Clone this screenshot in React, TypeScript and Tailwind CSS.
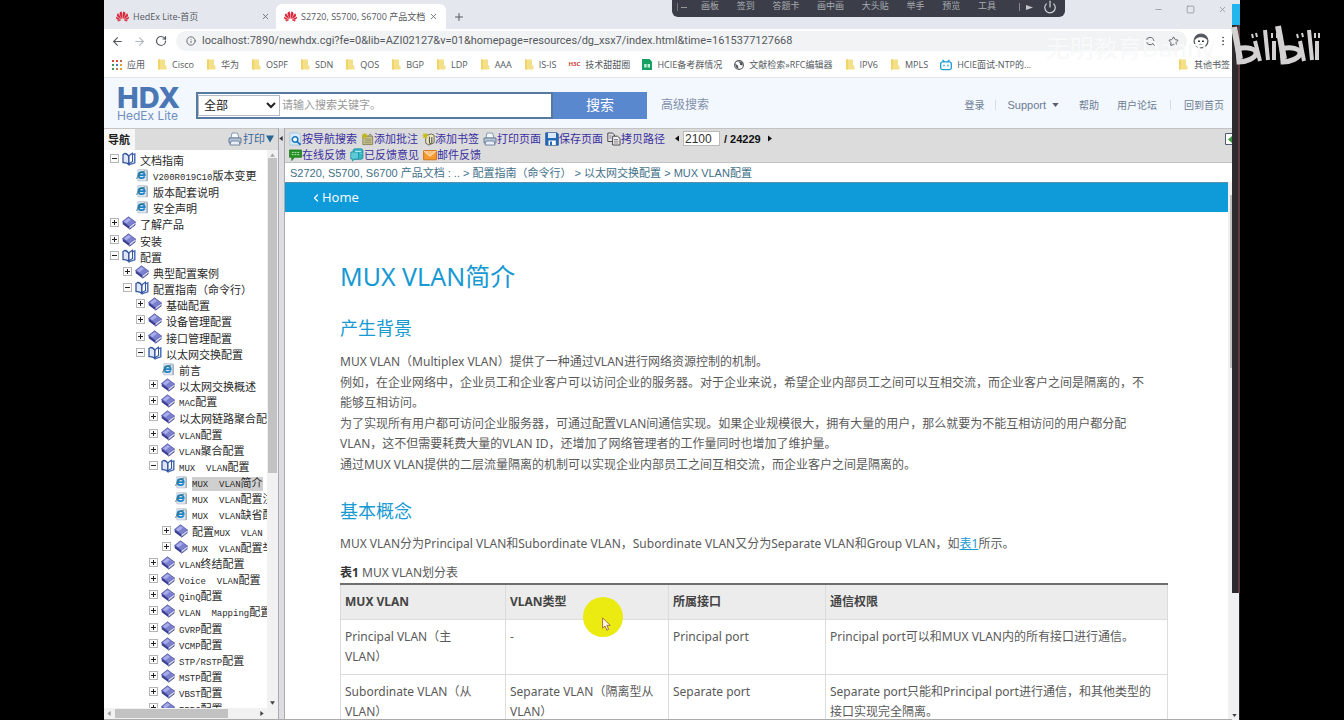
import React from "react";
import { ArrowLeft, ArrowRight, ChevronLeft, Info, Minus, MoreVertical, Plus, Power, RotateCw, Square, Star, X, ZoomOut } from "lucide-react";
import { SiBilibili, SiHuawei } from "react-icons/si";

/* ---------- icons ---------- */

const ClosedBook = () => (
  <svg viewBox="0 0 14 14" className="h-[14px] w-[14px] shrink-0" aria-hidden="true">
    <path d="M0.5 5.5 L6.5 0.8 L13.5 6 L7.5 10.5 Z" fill="#7b80cf" stroke="#4a4fa0" strokeWidth="0.7" />
    <path d="M2 5.4 L6.5 1.9 L9 3.8 L4.5 7.2 Z" fill="#a9adea" />
    <path d="M0.5 5.5 L7.5 10.5 L7.5 13.3 L0.8 8.3 Z" fill="#383d92" />
    <path d="M7.5 10.5 L13.5 6 L13 8.3 L7.5 12.5 Z" fill="#eceefa" stroke="#4a4fa0" strokeWidth="0.5" />
    <path d="M7.5 13.3 L13.6 8.6" stroke="#383d92" strokeWidth="0.9" />
  </svg>
);

const OpenBook = () => (
  <svg viewBox="0 0 14 14" className="h-[14px] w-[14px] shrink-0" aria-hidden="true">
    <path d="M1 2.5 L2.8 1.5 C5 1.6 6.2 3 6.8 4.4 L6.8 12.5 C5.5 10.8 3.5 10.4 1 10.6 Z" fill="#dfe6fb" stroke="#34559c" strokeWidth="1.3" />
    <path d="M7 4.4 C7.4 3 9 2.2 10.4 1.2 L10.6 9.6 C9 10.3 7.6 11 7 12.5 Z" fill="#fff" stroke="#34559c" strokeWidth="1.1" />
    <path d="M10.6 2.6 L12.8 2 L12.8 10.8 L7.4 12.6" fill="none" stroke="#3f66b8" strokeWidth="1.4" />
  </svg>
);

const PageIcon = () => (
  <svg viewBox="0 0 14 14" className="h-[13px] w-[14px] shrink-0" aria-hidden="true">
    <path d="M2.5 0.7 H12.4 V12.8 H2.5 Z" fill="#dfe7f2" stroke="#b5bfcd" strokeWidth="0.8" />
    <path d="M12.6 1.5 V13" stroke="#7d8ba1" strokeWidth="0.9" />
    <path d="M9.8 8 C8.6 11 3.2 10.4 3.2 6.6 C3.2 2.6 9.6 2.2 9.9 6.5 L4 6.5" fill="none" stroke="#1e83c4" strokeWidth="1.9" />
    <path d="M1.4 10.8 C1 8 6 2.4 10.6 2.2" fill="none" stroke="#3b6b55" strokeWidth="0.9" />
  </svg>
);

const Toggle = ({ open }: { open: boolean }) => (
  <svg viewBox="0 0 9 9" className="h-[9px] w-[9px]" aria-hidden="true">
    <rect x="0.5" y="0.5" width="8" height="8" fill="#fbfbfb" stroke="#b5b5b5" />
    <path d={open ? "M2 4.5 H7" : "M2 4.5 H7 M4.5 2 V7"} stroke="#222" />
  </svg>
);

const FolderMark = () => (
  <svg viewBox="0 0 10 11" className="h-[11px] w-[10px] shrink-0" aria-hidden="true">
    <path d="M1 0.5 H8 V6.5 H9.5 V10.5 H1 Z" fill="#f5e08a" />
    <path d="M1 0.5 H3 V10.5 H1 Z" fill="#f0d468" />
  </svg>
);

const SearchPage = () => (
  <svg viewBox="0 0 14 14" className="h-[14px] w-[13px]" aria-hidden="true">
    <path d="M1 0.5 H10 L12.5 3 V13.5 H1 Z" fill="#d9ecfa" stroke="#9fc0da" strokeWidth="0.8" />
    <circle cx="6.5" cy="7.5" r="3" fill="#fff" stroke="#1b76bb" strokeWidth="1.7" />
    <path d="M8.7 9.8 L12.5 13.2" stroke="#1b76bb" strokeWidth="1.9" />
  </svg>
);
const NoteIcon = () => (
  <svg viewBox="0 0 14 14" className="h-[14px] w-[13px]" aria-hidden="true">
    <path d="M2 4 H12.5 V13 H2 Z" fill="#c9c48f" stroke="#7c7a52" strokeWidth="0.9" />
    <path d="M4 7 H11 M4 9 H11 M4 11 H11" stroke="#85835e" strokeWidth="0.8" />
    <path d="M4 0.5 V7 M0.8 3.6 H7.2 M1.6 1.4 L6.2 5.9 M6.2 1.4 L1.6 5.9" stroke="#c1b51c" strokeWidth="1.1" />
    <path d="M8 4 L10 1.5 L11.5 4" fill="none" stroke="#7c7a52" />
  </svg>
);
const BookmarkIcon = () => (
  <svg viewBox="0 0 14 14" className="h-[14px] w-[13px]" aria-hidden="true">
    <path d="M4 3.5 L10 1.5 L13 3 V11 L7.5 13.5 L4 11.5 Z" fill="#e9e6c8" stroke="#55523e" strokeWidth="0.9" />
    <path d="M8 4.5 V11.2 C8 12.4 10.6 12 10.6 10.6 V5" fill="none" stroke="#3d3b30" strokeWidth="1" />
    <path d="M3.5 0.5 V6.5 M0.5 3.5 H6.5 M1.3 1.3 L5.7 5.7 M5.7 1.3 L1.3 5.7" stroke="#c9bc1a" strokeWidth="1.1" />
  </svg>
);
const PrintIcon = () => (
  <svg viewBox="0 0 14 14" className="h-[14px] w-[14px]" aria-hidden="true">
    <path d="M4 1 H9.5 L11 6 H3 Z" fill="#f6f9fd" stroke="#7187a3" strokeWidth="0.8" />
    <path d="M1 6 H13 V11 H1 Z" fill="#b9c6d8" stroke="#5d7390" strokeWidth="0.9" />
    <path d="M3 9 H11 L12 13 H2 Z" fill="#e9eff6" stroke="#5d7390" strokeWidth="0.8" />
  </svg>
);
const SaveIcon = () => (
  <svg viewBox="0 0 14 14" className="h-[14px] w-[14px]" aria-hidden="true">
    <path d="M0.7 0.8 H12 L13.3 2 V13.2 H0.7 Z" fill="#2469b8" stroke="#174e92" strokeWidth="0.7" />
    <path d="M3 1 H11 V6 H3 Z" fill="#dbe9f7" />
    <path d="M3.5 8.5 H10.8 V13 H3.5 Z" fill="#fff" />
    <path d="M5 9.5 H7 V13 H5 Z" fill="#2469b8" />
  </svg>
);
const CopyIcon = () => (
  <svg viewBox="0 0 14 14" className="h-[14px] w-[14px]" aria-hidden="true">
    <path d="M0.8 1 H5.5 L7.5 3 V9.5 H0.8 Z" fill="#e6e6ea" stroke="#4a4a52" />
    <path d="M5.6 4.2 H10.5 L13 6.5 V13 H5.6 Z" fill="#f3f3f6" stroke="#4a4a52" />
    <path d="M7 7.5 H11 M7 9.2 H11.5 M7 11 H11.5 M2.2 4 H4.6 M2.2 6 H4.6" stroke="#6a6a74" strokeWidth="0.8" />
  </svg>
);
const ChatIcon = () => (
  <svg viewBox="0 0 14 14" className="h-[14px] w-[13px]" aria-hidden="true">
    <path d="M0.5 1.5 H13.5 V9.5 H6 L3 13 V9.5 H0.5 Z" fill="#229222" stroke="#167016" strokeWidth="0.7" />
    <path d="M3 4.2 H11 M3 6.6 H11" stroke="#c9efc9" strokeWidth="1" strokeDasharray="2 1" />
  </svg>
);
const RepliedIcon = () => (
  <svg viewBox="0 0 14 14" className="h-[14px] w-[14px]" aria-hidden="true">
    <rect x="3" y="0.8" width="10" height="10.5" rx="2" fill="#35b4c4" stroke="#1a8fa3" strokeWidth="0.8" />
    <path d="M0.8 4 H8.5 V11 H4 L2.5 13.2 V11 H0.8 Z" fill="#5ccbd6" stroke="#1a8fa3" strokeWidth="0.8" />
    <path d="M5 3.4 H11 M10.6 5.6 H11.4" stroke="#d6f6fa" strokeWidth="0.9" />
  </svg>
);
const MailIcon = () => (
  <svg viewBox="0 0 14 14" className="h-[14px] w-[14px]" aria-hidden="true">
    <path d="M0.6 2.6 H13.4 V11.8 H0.6 Z" fill="#f59b32" stroke="#cf6d10" strokeWidth="0.9" />
    <path d="M0.8 2.9 L7 8.2 L13.2 2.9" fill="#fbc27b" stroke="#fdebd2" strokeWidth="0.9" />
  </svg>
);
const AppsGrid = () => (
  <svg viewBox="0 0 10 10" className="h-[10px] w-[10px] shrink-0" aria-hidden="true">
    {["#d64c3d", "#d64c3d", "#c2633d", "#3c9a55", "#4a78c8", "#d9a627", "#3c9a55", "#b3874c", "#d9a627"].map((c, i) => (
      <rect key={i} x={(i % 3) * 4} y={Math.floor(i / 3) * 4} width="2" height="2" fill={c} />
    ))}
  </svg>
);
const SheetIcon = () => (
  <svg viewBox="0 0 10 11" className="h-[11px] w-[10px] shrink-0" aria-hidden="true">
    <path d="M0 0 H7.5 L10 2.5 V11 H0 Z" fill="#16a163" />
    <path d="M2.2 5 H4.6 V8.5 H2.2 Z M5.6 5 H8 V8.5 H5.6 Z" fill="#c9f0dc" />
  </svg>
);
const GlobeIcon = () => (
  <svg viewBox="0 0 10 10" className="h-[10px] w-[10px] shrink-0" aria-hidden="true">
    <circle cx="5" cy="5" r="4.4" fill="#fff" stroke="#55595e" strokeWidth="1.1" />
    <path d="M1 3.5 L4 5.5 L4.5 8.8 L2 7.6 Z M4 1 L8.6 2.6 L8.6 5.5 L6 5 L6 3.6 Z" fill="#55595e" />
  </svg>
);
const Avatar = () => (
  <svg viewBox="0 0 16 16" className="h-[16px] w-[16px]" aria-hidden="true">
    <circle cx="8" cy="8" r="6.9" fill="#fff" stroke="#55595e" strokeWidth="1.3" />
    <path d="M1.5 7.5 C2 2 5 1.2 8 1.2 C11 1.2 14 2 14.5 7.5 C12.5 4.6 9 4.3 8 4.3 C6 4.3 3.5 4.6 1.5 7.5 Z" fill="#55595e" />
    <path d="M5 8.2 H7 M9 8.2 H11" stroke="#33363a" strokeWidth="1.4" />
    <path d="M6 11.4 H10" stroke="#8a8e94" strokeWidth="0.8" />
  </svg>
);

const BiliLogo = () => (
  <svg viewBox="0 0 90 42" className="h-[42px] w-[90px]" fill="none" stroke="#d3d1d1" aria-label="bilibili">
    <g>
      <path d="M3 2 L9 34" strokeWidth="6" />
      <path d="M7 24 C16 21 25 24 25 28 C25 33 15 37 8 37 Z" strokeWidth="5" />
      <path d="M24 16 L29 36 M34 5 L37 35 M43 16 L43 35" strokeWidth="4" />
      <path d="M21 9 L22 13 M25 8 L26 12 M41 8 V13 M46 8 V13" strokeWidth="2" />
    </g>
    <g transform="translate(44 0)">
      <path d="M3 1 L9 34" strokeWidth="6" />
      <path d="M7 24 C16 21 25 24 25 28 C25 33 15 37 8 37 Z" strokeWidth="5" />
      <path d="M25 16 L29 36 M34 5 L37 35 M42 16 L42 35" strokeWidth="4" />
      <path d="M22 9 L23 13 M27 8 L28 12 M40 8 V13 M44 8 V13" strokeWidth="2" />
    </g>
  </svg>
);

/* ---------- navigation tree ---------- */

type Kind = "open" | "closed" | "page";
type Node = { level: number; kind: Kind; label: string; current?: boolean };

const tree: Node[] = [
  { level: 0, kind: "open", label: "文档指南" },
  { level: 1, kind: "page", label: "V200R019C10版本变更" },
  { level: 1, kind: "page", label: "版本配套说明" },
  { level: 1, kind: "page", label: "安全声明" },
  { level: 0, kind: "closed", label: "了解产品" },
  { level: 0, kind: "closed", label: "安装" },
  { level: 0, kind: "open", label: "配置" },
  { level: 1, kind: "closed", label: "典型配置案例" },
  { level: 1, kind: "open", label: "配置指南（命令行）" },
  { level: 2, kind: "closed", label: "基础配置" },
  { level: 2, kind: "closed", label: "设备管理配置" },
  { level: 2, kind: "closed", label: "接口管理配置" },
  { level: 2, kind: "open", label: "以太网交换配置" },
  { level: 3, kind: "page", label: "前言" },
  { level: 3, kind: "closed", label: "以太网交换概述" },
  { level: 3, kind: "closed", label: "MAC配置" },
  { level: 3, kind: "closed", label: "以太网链路聚合配置" },
  { level: 3, kind: "closed", label: "VLAN配置" },
  { level: 3, kind: "closed", label: "VLAN聚合配置" },
  { level: 3, kind: "open", label: "MUX  VLAN配置" },
  { level: 4, kind: "page", label: "MUX  VLAN简介", current: true },
  { level: 4, kind: "page", label: "MUX  VLAN配置注意事项" },
  { level: 4, kind: "page", label: "MUX  VLAN缺省配置" },
  { level: 4, kind: "closed", label: "配置MUX  VLAN" },
  { level: 4, kind: "closed", label: "MUX  VLAN配置举例" },
  { level: 3, kind: "closed", label: "VLAN终结配置" },
  { level: 3, kind: "closed", label: "Voice  VLAN配置" },
  { level: 3, kind: "closed", label: "QinQ配置" },
  { level: 3, kind: "closed", label: "VLAN  Mapping配置" },
  { level: 3, kind: "closed", label: "GVRP配置" },
  { level: 3, kind: "closed", label: "VCMP配置" },
  { level: 3, kind: "closed", label: "STP/RSTP配置" },
  { level: 3, kind: "closed", label: "MSTP配置" },
  { level: 3, kind: "closed", label: "VBST配置" },
  { level: 3, kind: "closed", label: "ERPS配置" },
];

const indent = ["pl-0", "pl-[13px]", "pl-[26px]", "pl-[39px]", "pl-[52px]"];

/* Latin runs are set in a narrower monospace than the ideographs around them. */
const MixedLabel = ({ text }: { text: string }) => (
  <>
    {text.split(/([ -~]+)/).map((run, i) =>
      /^[ -~]+$/.test(run) ? (
        <span key={i} className="font-['Liberation_Mono',monospace] text-[9px]">{run}</span>
      ) : (
        run
      ),
    )}
  </>
);

function NavTree() {
  return (
    <ul className="min-w-0 flex-1 overflow-hidden pt-[2px] pl-[6px] text-[11px] text-[#2a2a2a]">
      {tree.map((n, i) => (
        <li key={i} className={`flex h-[16px] items-center nth-[6n]:mt-px ${indent[n.level]}`}>
          {n.kind === "page" ? (
            <span className="w-[9px] shrink-0" />
          ) : (
            <button type="button" aria-label={n.kind === "open" ? "collapse" : "expand"} className="w-[9px] shrink-0 pb-[3px]">
              <Toggle open={n.kind === "open"} />
            </button>
          )}
          <span className="mr-[4px] ml-[3px] pb-[2px]">
            {n.kind === "page" ? <PageIcon /> : n.kind === "open" ? <OpenBook /> : <ClosedBook />}
          </span>
          <a href="#doc" className={`mt-[2px] flex h-[14px] items-center whitespace-pre ${n.current ? "bg-[#cfcfcf]" : ""}`}>
            <span><MixedLabel text={n.label} /></span>
          </a>
        </li>
      ))}
    </ul>
  );
}

function Sidebar() {
  return (
    <aside className="flex w-[174px] shrink-0 flex-col">
      <div className="flex h-[22px] shrink-0 items-end border-t border-[#c5c5c5] bg-[#dcdcdc] text-[11px] leading-[16px]">
        <span className="w-[31px] self-stretch bg-[#f6f6f6] pt-[3px] pl-[4px] font-bold whitespace-nowrap text-[#222]">导航</span>
        <button type="button" className="ml-auto flex items-center gap-px pr-[4px] pb-[3px] text-[#38669a]">
          <PrintIcon />
          打印
          <svg viewBox="0 0 8 8" className="h-[8px] w-[8px]" aria-hidden="true"><path d="M0 0.5 H8 L4 7.5 Z" fill="#256695" /></svg>
        </button>
      </div>
      <div className="flex min-h-0 flex-1">
        <NavTree />
        <div className="flex w-[11px] shrink-0 flex-col items-center bg-[#f1f1f1] py-[3px]">
          <svg viewBox="0 0 6 4" className="h-[4px] w-[5px]" aria-hidden="true"><path d="M0 4 H6 L3 0 Z" fill="#aaa" /></svg>
          <div className="mt-px h-[57%] w-[9px] bg-[#c2c2c2]" />
          <svg viewBox="0 0 6 4" className="mt-auto h-[4px] w-[5px]" aria-hidden="true"><path d="M0 0 H6 L3 4 Z" fill="#444" /></svg>
        </div>
      </div>
      <div className="flex h-[11px] shrink-0 items-center bg-[#f1f1f1] px-[3px]">
        <svg viewBox="0 0 4 6" className="h-[5px] w-[4px]" aria-hidden="true"><path d="M4 0 V6 L0 3 Z" fill="#999" /></svg>
        <div className="ml-[4px] h-[9px] w-[67%] bg-[#c2c2c2]" />
        <svg viewBox="0 0 4 6" className="mr-[11px] ml-auto h-[5px] w-[4px]" aria-hidden="true"><path d="M0 0 V6 L4 3 Z" fill="#444" /></svg>
      </div>
    </aside>
  );
}

/* ---------- browser frame ---------- */

const folder = <FolderMark />;
const bookmarks: { icon: React.ReactNode; label: string }[] = [
  { icon: <AppsGrid />, label: "应用" },
  { icon: folder, label: "Cisco" },
  { icon: folder, label: "华为" },
  { icon: folder, label: "OSPF" },
  { icon: folder, label: "SDN" },
  { icon: folder, label: "QOS" },
  { icon: folder, label: "BGP" },
  { icon: folder, label: "LDP" },
  { icon: folder, label: "AAA" },
  { icon: folder, label: "IS-IS" },
  { icon: <span className="text-[6px] font-bold text-[#d5382f]">H3C</span>, label: "技术甜甜圈" },
  { icon: <SheetIcon />, label: "HCIE备考群情况" },
  { icon: <GlobeIcon />, label: "文献检索»RFC编辑器" },
  { icon: folder, label: "IPV6" },
  { icon: folder, label: "MPLS" },
  { icon: <SiBilibili className="h-[12px] w-[12px] shrink-0 text-[#1f9fd0]" />, label: "HCIE面试-NTP的..." },
];

function BrowserFrame() {
  return (
    <div className="shrink-0 font-['Open_Sans','Noto_Sans_CJK_SC',sans-serif] text-[#55595e]">
      <div className="flex h-[29px] bg-[#e4e7ed] text-[9px]">
        <div className="flex w-[172px] items-center gap-[4px] pt-[4px] pl-[12px]">
          <SiHuawei className="h-[13px] w-[13px] text-[#d92b3e]" />
          <span>HedEx Lite-首页</span>
          <X className="mr-[6px] ml-auto h-[9px] w-[9px]" />
        </div>
        <div className="mt-[4px] flex w-[170px] items-center gap-[4px] rounded-t-[6px] bg-white pl-[8px]">
          <SiHuawei className="h-[13px] w-[13px] shrink-0 text-[#d92b3e]" />
          <span className="overflow-hidden whitespace-nowrap">S2720, S5700, S6700 产品文档</span>
          <X className="mr-[8px] ml-auto h-[9px] w-[9px] shrink-0" />
        </div>
        <button type="button" aria-label="new tab" className="ml-[7px] pt-[4px]"><Plus className="h-[12px] w-[12px]" /></button>
        <div className="mr-[5px] ml-auto flex items-start gap-[23px] pt-[5px] text-[#8b8f96]">
          <Minus className="h-[9px] w-[9px]" />
          <Square className="h-[9px] w-[9px]" />
          <X className="h-[9px] w-[9px]" />
        </div>
      </div>
      <div className="flex h-[24px] items-center bg-white pl-[7px]">
        <ArrowLeft className="h-[13px] w-[13px]" />
        <ArrowRight className="ml-[9px] h-[13px] w-[13px] text-[#b4b8bd]" />
        <RotateCw className="ml-[9px] h-[12px] w-[12px]" strokeWidth={2.4} />
        <div className="ml-[9px] flex h-[20px] min-w-0 flex-1 items-center rounded-l-full rounded-r-full bg-[#f1f3f4] pl-[10px] text-[11px]">
          <Info className="mr-[6px] h-[10px] w-[10px] shrink-0" />
          <label className="sr-only" htmlFor="url">URL</label>
          <input id="url" className="min-w-0 flex-1 bg-transparent font-['Roboto',sans-serif] outline-none" defaultValue="localhost:7890/newhdx.cgi?fe=0&lib=AZI02127&v=01&homepage=resources/dg_xsx7/index.html&time=1615377127668" />
          <ZoomOut className="mr-[12px] h-[11px] w-[11px]" />
          <Star className="mr-[8px] h-[11px] w-[11px]" />
        </div>
        <span className="ml-[6px]"><Avatar /></span>
        <MoreVertical className="mr-[3px] ml-[8px] h-[12px] w-[12px]" />
      </div>
      <nav className="flex h-[25px] items-center gap-[12px] border-b border-[#e3e5e8] bg-white pb-px pl-[8px] text-[9px] whitespace-nowrap">
        {bookmarks.map((b) => (
          <a key={b.label} href="#bookmark" className="flex items-center gap-[5px]">{b.icon}{b.label}</a>
        ))}
        <a href="#bookmark" className="mr-[2px] ml-auto flex items-center gap-[6px]">{folder}其他书签</a>
      </nav>
    </div>
  );
}

function SiteHeader() {
  return (
    <header className="flex h-[50px] shrink-0 items-center bg-[#f3f7fe] pl-[13px] text-[#6c7c92]">
      <div className="w-[66px] font-['Inter',sans-serif] text-[#4b78b5]">
        <div className="text-[29px] leading-[25px] font-extrabold">HDX</div>
        <div className="text-[12px] leading-[12px] whitespace-nowrap text-[#6f8fc0]">HedEx Lite</div>
      </div>
      <form className="ml-[13px] mt-[5px] flex h-[27px]" onSubmit={(e) => e.preventDefault()}>
        <div className="flex border-2 border-[#56799f] bg-white">
          <select aria-label="范围" className="my-px w-[82px] border border-[#b5bcc8] bg-white pl-px text-[12px] text-[#222]">
            <option>全部</option>
          </select>
          <input aria-label="搜索" placeholder="请输入搜索关键字。" className="w-[271px] px-[2px] text-[11px] outline-none placeholder:text-[#999]" />
        </div>
        <button type="submit" className="w-[94px] bg-[#5a88cf] text-[14px] text-white">搜索</button>
      </form>
      <a href="#advanced" className="mt-[4px] ml-[14px] text-[12px] text-[#7f90aa]">高级搜索</a>
      <nav className="mr-[8px] ml-auto flex items-center pt-[4px] text-[10px]">
        <a href="#login">登录</a>
        <span className="mx-[11px] h-[10px] w-px bg-[#d6dbe4]" />
        <a href="#support" className="flex items-center gap-[6px] text-[11px]">
          Support
          <svg viewBox="0 0 8 5" className="h-[4px] w-[7px]" aria-hidden="true"><path d="M0 0 H8 L4 5 Z" fill="#55606e" /></svg>
        </a>
        <a href="#help" className="ml-[20px]">帮助</a>
        <a href="#forum" className="ml-[18px]">用户论坛</a>
        <span className="mx-[13px] h-[10px] w-px bg-[#d6dbe4]" />
        <a href="#home">回到首页</a>
      </nav>
    </header>
  );
}

/* ---------- document pane ---------- */

const Tool = ({ icon, children }: { icon: React.ReactNode; children: React.ReactNode }) => (
  <a href="#tool" className="flex items-center whitespace-nowrap">{icon}{children}</a>
);

function Toolbar() {
  return (
    <div className="h-[35px] shrink-0 border-y border-[#c2c2c2] bg-[#dcdcdc] pl-[4px] text-[11px] leading-[16px] text-[#3a2fa0]">
      <div className="flex h-[16px] items-center gap-[4px] pt-[3px]">
        <Tool icon={<SearchPage />}>按导航搜索</Tool>
        <Tool icon={<NoteIcon />}>添加批注</Tool>
        <Tool icon={<BookmarkIcon />}>添加书签</Tool>
        <Tool icon={<PrintIcon />}>打印页面</Tool>
        <Tool icon={<SaveIcon />}>保存页面</Tool>
        <Tool icon={<CopyIcon />}>拷贝路径</Tool>
        <button type="button" aria-label="previous" className="ml-[6px]">
          <svg viewBox="0 0 4 6" className="h-[7px] w-[4px]"><path d="M4 0 V6 L0 3 Z" fill="#111" /></svg>
        </button>
        <input aria-label="页码" defaultValue="2100" className="h-[15px] w-[37px] border border-[#b9b9b9] bg-white px-px text-[12px] text-[#333]" />
        <b className="text-[#111]">/ 24229</b>
        <button type="button" aria-label="next" className="ml-[3px]">
          <svg viewBox="0 0 4 6" className="h-[7px] w-[4px]"><path d="M0 0 V6 L4 3 Z" fill="#111" /></svg>
        </button>
        <svg viewBox="0 0 7 12" className="ml-auto h-[12px] w-[7px]" aria-hidden="true">
          <path d="M7 0.5 H0.5 V11.5 H7" fill="#fff" stroke="#555a75" />
          <path d="M7 3 L3 6.5 L7 10 Z" fill="#3f9c3f" />
        </svg>
      </div>
      <div className="flex h-[16px] items-center gap-[4px] pt-[3px]">
        <Tool icon={<ChatIcon />}>在线反馈</Tool>
        <Tool icon={<RepliedIcon />}>已反馈意见</Tool>
        <Tool icon={<MailIcon />}>邮件反馈</Tool>
      </div>
    </div>
  );
}

const rows: React.ReactNode[][] = [
  [<>Principal VLAN（主<br />VLAN）</>, "-", "Principal port", "Principal port可以和MUX VLAN内的所有接口进行通信。"],
  [<>Subordinate VLAN（从<br />VLAN）</>, <>Separate VLAN（隔离型从<br />VLAN）</>, "Separate port", <>Separate port只能和Principal port进行通信，和其他类型的<br />接口实现完全隔离。</>],
];

const H2 = ({ children }: { children: React.ReactNode }) => (
  <h2 className="text-[18px] leading-[24px] text-[#1899d2]">{children}</h2>
);

function Article() {
  return (
    <article id="doc" className="min-w-0 flex-1 overflow-hidden bg-white pt-[46px] pr-[60px] pl-[55px] font-['Noto_Sans','Noto_Sans_CJK_SC',sans-serif] text-[12px] leading-[20px] text-[#5a5a5a]">
      <h1 className="text-[25px] leading-[36px] text-[#1899d2]">MUX VLAN简介</h1>
      <div className="mt-[22px]"><H2>产生背景</H2></div>
      <div className="mt-[12px] flex flex-col gap-px">
        <p>MUX VLAN（Multiplex VLAN）提供了一种通过VLAN进行网络资源控制的机制。</p>
        <p>例如，在企业网络中，企业员工和企业客户可以访问企业的服务器。对于企业来说，希望企业内部员工之间可以互相交流，而企业客户之间是隔离的，不<br />能够互相访问。</p>
        <p>为了实现所有用户都可访问企业服务器，可通过配置VLAN间通信实现。如果企业规模很大，拥有大量的用户，那么就要为不能互相访问的用户都分配<br />VLAN，这不但需要耗费大量的VLAN ID，还增加了网络管理者的工作量同时也增加了维护量。</p>
        <p>通过MUX VLAN提供的二层流量隔离的机制可以实现企业内部员工之间互相交流，而企业客户之间是隔离的。</p>
      </div>
      <div className="mt-[24px]"><H2>基本概念</H2></div>
      <p className="mt-[11px]">
        MUX VLAN分为Principal VLAN和Subordinate VLAN，Subordinate VLAN又分为Separate VLAN和Group VLAN，如<a href="#table1" className="text-[#1899d2] underline">表1</a>所示。
      </p>
      <table id="table1" className="mt-[9px] w-full table-fixed border-collapse text-left">
        <caption className="text-left"><b className="text-[#333]">表1</b> MUX VLAN划分表</caption>
        <colgroup>
          <col className="w-[165px]" />
          <col className="w-[163px]" />
          <col className="w-[157px]" />
          <col />
        </colgroup>
        <thead className="border-t-2 border-[#6d6d6d] bg-[#ececec] text-[#444]">
          <tr>
            {["MUX VLAN", "VLAN类型", "所属接口", "通信权限"].map((h) => (
              <th key={h} className="border-x border-b border-[#dcdcdc] px-[4px] py-[7px] font-bold">{h}</th>
            ))}
          </tr>
        </thead>
        <tbody>
          {rows.map((r, i) => (
            <tr key={i}>
              {r.map((c, j) => (
                <td key={j} className="border border-[#dcdcdc] px-[4px] py-[7px] align-top">{c}</td>
              ))}
            </tr>
          ))}
        </tbody>
      </table>
    </article>
  );
}

function DocumentPane() {
  return (
    <main className="flex min-w-0 flex-1 flex-col">
      <Toolbar />
      <nav className="flex h-[19px] shrink-0 items-center bg-white pt-px pl-[5px] text-[11px] whitespace-pre text-[#3f7088]">
        <a href="#doc">S2720, S5700, S6700 产品文档 : .. </a>&gt;<a href="#doc"> 配置指南（命令行） </a>&gt;<a href="#doc"> 以太网交换配置 </a>&gt;<a href="#doc"> MUX VLAN配置</a>
      </nav>
      <div className="flex min-h-0 flex-1">
        <div className="flex min-w-0 flex-1 flex-col">
          <div className="flex h-[30px] shrink-0 items-center border-t border-[#5c8ea8] bg-[#0f9ada] pl-[25px] font-['Open_Sans',sans-serif] text-[13px] text-white">
            <a href="#home" className="flex items-center"><ChevronLeft className="h-[12px] w-[12px]" strokeWidth={2.4} />Home</a>
          </div>
          <Article />
        </div>
        <div className="w-[4px] shrink-0 bg-[#f1f1f1] pt-[13px]"><div className="ml-[2px] h-[33%] bg-[#c2c2c2]" /></div>
      </div>
    </main>
  );
}

/* ---------- overlays ---------- */

const RecorderBar = () => (
  <div className="absolute top-0 left-1/2 flex h-[17px] w-[393px] items-center rounded-b-[6px] bg-[#3b3e48] pr-[8px] pb-[3px] pl-[5px] text-[9px] whitespace-nowrap text-[#a7aab2]">
    <span className="h-[8px] w-px bg-[#777]" />
    <span className="ml-[3px] h-px w-[6px] bg-[#999]" />
    <div className="ml-[14px] flex flex-1 justify-between">
      {["画板", "签到", "答题卡", "画中画", "大头贴", "举手", "预览", "工具"].map((t) => (
        <button key={t} type="button">{t}</button>
      ))}
    </div>
    <span className="ml-[23px] h-[8px] w-px bg-[#888]" />
    <svg viewBox="0 0 7 5" className="ml-[6px] h-[5px] w-[7px]" aria-hidden="true"><path d="M0 0 L7 2.5 L0 5 Z" fill="#c5c7cc" /></svg>
    <Power className="ml-[10px] h-[14px] w-[14px] text-[#d5d7db]" />
  </div>
);

const Pointer = () => (
  <div className="absolute top-[597px] left-[479px] h-[40px] w-[40px] rounded-full bg-[#ebeb12]">
    <svg viewBox="0 0 9 14" className="mt-[20px] ml-[19px] h-[14px] w-[9px]" aria-hidden="true">
      <path d="M0.6 0.8 V11.2 L3 9 L4.8 13.2 L6.6 12.4 L4.9 8.4 H8.2 Z" fill="#fff7e0" stroke="#9c6a3c" strokeWidth="0.9" />
    </svg>
  </div>
);

export default function App() {
  return (
    <div className="h-screen overflow-hidden bg-black px-26 font-['Liberation_Sans','Noto_Sans_CJK_SC',sans-serif]">
      <div className="relative flex h-full">
        <div className="flex min-w-0 flex-1 flex-col border-b border-[#aaa] bg-white">
          <BrowserFrame />
          <SiteHeader />
          <div className="flex min-h-0 flex-1">
            <Sidebar />
            <div className="w-[7px] shrink-0 border-x border-[#a9a9ae] bg-[#dedee2] pt-[8px]">
              <svg viewBox="0 0 4 6" className="h-[5px] w-[4px]" aria-hidden="true"><path d="M4 0 V6 L0 3 Z" fill="#333" /></svg>
            </div>
            <DocumentPane />
          </div>
        </div>
        <div className="flex w-[8px] shrink-0 flex-col bg-[#e4e7ed] pt-[4px]">
          <div className="h-[21px] bg-[#21b7ee]" />
          <div className="h-[568px] border-r-2 border-[#5a3b40] bg-[#2d2b2d]" />
          <div className="flex flex-1 items-end border-r border-[#222] bg-[#f0f0f2] pb-[3px]">
            <svg viewBox="0 0 6 4" className="h-[3px] w-[5px]" aria-hidden="true"><path d="M0 0 H6 L3 4 Z" fill="#444" /></svg>
          </div>
        </div>
        <RecorderBar />
        <Pointer />
        <div className="absolute top-[36px] right-[26px] font-['Open_Sans','Noto_Sans_CJK_SC',sans-serif] text-[24px] leading-[24px] whitespace-nowrap text-white/70 [text-shadow:0_0_1px_#eceef0]">无明教育Danny</div>
        <div className="absolute top-[25px] -right-[81px]"><BiliLogo /></div>
      </div>
    </div>
  );
}
